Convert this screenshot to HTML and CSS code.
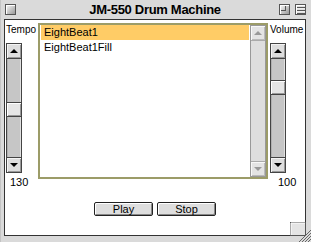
FILE: index.html
```html
<!DOCTYPE html>
<html lang="en">
<head>
    <meta charset="UTF-8">
    <title>JM-550 Drum Machine</title>
    <link rel="stylesheet" href="styles.css">
</head>
<body>
    <div class="window">
        <div class="titlebar">
            <span class="tbox close"></span>
            <span class="title">JM-550 Drum Machine</span>
            <span class="tbox zoom"><span class="zoom-inner"></span></span>
            <span class="tbox collapse"></span>
        </div>
        <div class="content">
            <div class="main">
                <div class="side left">
                    <div class="label">Tempo</div>
                    <div class="scrollbar">
                        <div class="arrow up"></div>
                        <div class="track"><div class="thumb" style="margin-top: 43px"></div></div>
                        <div class="arrow down"></div>
                    </div>
                    <div class="value">130</div>
                </div>
                <div class="list">
                    <div class="rows">
                        <div class="row selected">EightBeat1</div>
                        <div class="row">EightBeat1Fill</div>
                    </div>
                    <div class="scrollbar disabled">
                        <div class="arrow up"></div>
                        <div class="track"></div>
                        <div class="arrow down"></div>
                    </div>
                </div>
                <div class="side right">
                    <div class="label">Volume</div>
                    <div class="scrollbar">
                        <div class="arrow up"></div>
                        <div class="track"><div class="thumb" style="margin-top: 21px"></div></div>
                        <div class="arrow down"></div>
                    </div>
                    <div class="value">100</div>
                </div>
            </div>
            <div class="buttons">
                <button class="btn">Play</button>
                <button class="btn">Stop</button>
            </div>
        </div>
        <svg class="grow" width="21" height="20" viewBox="0 0 21 20">
            <rect x="0.5" y="0.5" width="15" height="13" fill="#e4e4e4" stroke="#555"/>
            <line x1="1" y1="1" x2="15" y2="1" stroke="#fff"/>
            <line x1="1" y1="1" x2="1" y2="13" stroke="#fff"/>
            <line x1="9" y1="20" x2="21" y2="8" stroke="#666"/>
            <line x1="12" y1="20" x2="21" y2="11" stroke="#666"/>
            <line x1="15" y1="20" x2="21" y2="14" stroke="#666"/>
            <line x1="18" y1="20" x2="21" y2="17" stroke="#666"/>
        </svg>
    </div>
</body>
</html>
```

FILE: styles.css
```css
body {
    margin: 0;
    font-family: "Liberation Sans", Arial, sans-serif;
}
.window {
    position: relative;
    width: 311px;
    height: 242px;
    box-sizing: border-box;
    background: #dadada;
    border-left: 1px solid #c4c4c4;
    padding: 0 5px 6px 3px;
    display: flex;
    flex-direction: column;
}
.titlebar {
    height: 19px;
    display: flex;
    align-items: center;
    position: relative;
}
.tbox {
    width: 9px;
    height: 9px;
    border: 1px solid #555;
    background: linear-gradient(135deg, #fafafa, #999);
    box-shadow: inset 1px 1px 0 #fff;
    position: relative;
    margin-top: -1px;
}
.close {
    margin-left: 1px;
}
.zoom {
    margin-left: auto;
    margin-right: 5px;
}
.zoom-inner {
    position: absolute;
    left: 1px;
    top: 1px;
    width: 4px;
    height: 4px;
    border: 1px solid #555;
    border-top: none;
    border-left: none;
}
.collapse {
    background: repeating-linear-gradient(#eee 0 1px, #e0e0e0 1px 2px, #555 2px 3px);
}
.title {
    position: absolute;
    left: 0;
    right: 0;
    top: 2px;
    text-align: center;
    font-size: 13px;
    font-weight: bold;
    letter-spacing: -0.3px;
    color: #000;
}
.content {
    flex: 1;
    background: #fff;
    border: 1px solid #333;
    display: flex;
    flex-direction: column;
}
.main {
    height: 170px;
    display: flex;
}
.side {
    display: flex;
    flex-direction: column;
}
.side.left {
    width: 32px;
    padding-left: 1px;
}
.side.right {
    padding-left: 2px;
}
.label {
    font-size: 10px;
    line-height: 13px;
    margin-top: 3px;
    height: 20px;
}
.value {
    font-size: 11px;
    line-height: 13px;
    margin-top: 3px;
}
.side.left .value {
    padding-left: 4px;
}
.side.right .value {
    padding-left: 8px;
}
.scrollbar {
    width: 14px;
    height: 128px;
    border: 1px solid #444;
    display: flex;
    flex-direction: column;
    background: #c6c6c6;
}
.arrow {
    height: 14px;
    background: #dddddd;
    box-shadow: inset 1px 1px 0 #f4f4f4, inset -1px -1px 0 #999;
    position: relative;
}
.arrow.up {
    border-bottom: 1px solid #444;
}
.arrow.down {
    border-top: 1px solid #444;
}
.arrow::after {
    content: "";
    position: absolute;
    left: 3px;
    border-left: 4px solid transparent;
    border-right: 4px solid transparent;
}
.arrow.up::after {
    top: 5px;
    border-bottom: 4px solid #000;
}
.arrow.down::after {
    top: 5px;
    border-top: 4px solid #000;
}
.track {
    flex: 1;
    box-shadow: inset 1px 0 0 #b0b0b0, inset -1px 0 0 #e0e0e0;
}
.thumb {
    height: 13px;
    border-top: 1px solid #444;
    border-bottom: 1px solid #444;
    background: #e6e6e6;
    box-shadow: inset 1px 1px 0 #fff, inset -1px -1px 0 #999;
}
.list {
    margin-top: 3px;
    width: 226px;
    height: 152px;
    border: 2px solid #9c9c68;
    display: flex;
}
.rows {
    flex: 1;
    padding: 0 1px 0 1px;
}
.row {
    height: 15px;
    line-height: 15px;
    font-size: 11px;
    padding-left: 3px;
}
.row.selected {
    background: #ffcc66;
}
.list .scrollbar {
    height: 150px;
    border-color: #999;
    background: #dedede;
}
.list .arrow {
    background: #e4e4e4;
    box-shadow: inset 1px 1px 0 #f8f8f8, inset -1px -1px 0 #bbb;
}
.list .arrow.up {
    border-bottom-color: #aaa;
}
.list .arrow.down {
    border-top-color: #aaa;
}
.list .arrow.up::after {
    border-bottom-color: #999;
}
.list .arrow.down::after {
    border-top-color: #999;
}
.list .track {
    box-shadow: none;
}
.buttons {
    margin-top: 12px;
    display: flex;
    justify-content: center;
    gap: 4px;
}
.btn {
    width: 59px;
    height: 14px;
    padding: 0;
    border: 1px solid #222;
    border-radius: 2px;
    background: #dedede;
    box-shadow: inset 1px 1px 0 #fff, inset -1px -1px 0 #888;
    font-family: "Liberation Sans", Arial, sans-serif;
    font-size: 11px;
    line-height: 12px;
    color: #000;
}
.grow {
    position: absolute;
    left: 289px;
    top: 222px;
}
```
